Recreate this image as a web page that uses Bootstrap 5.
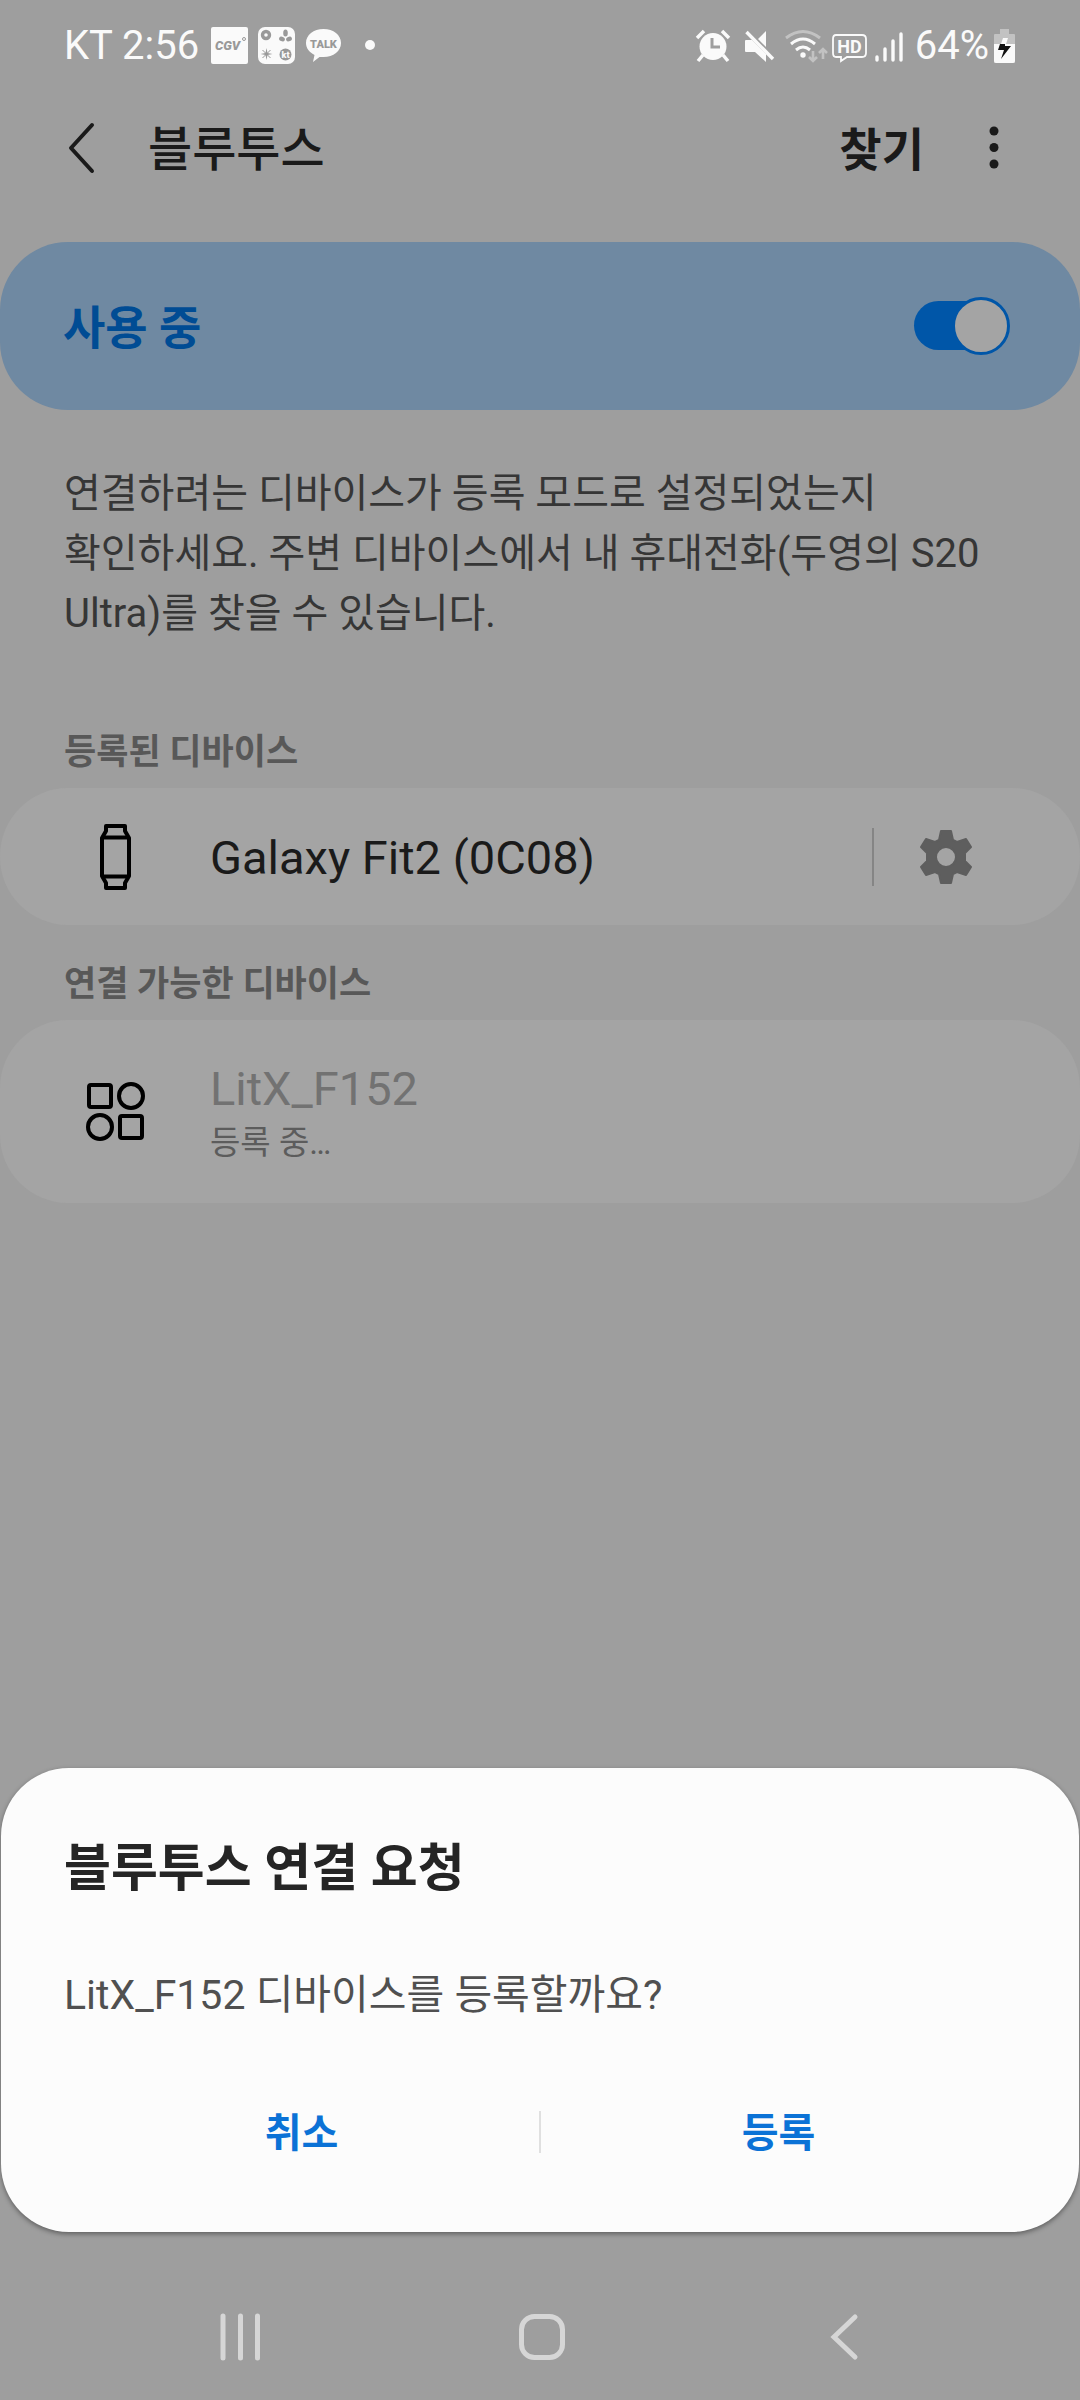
<!DOCTYPE html>
<html lang="ko">
<head>
<meta charset="utf-8">
<meta name="viewport" content="width=device-width, initial-scale=1">
<title>블루투스</title>
<link href="https://cdn.jsdelivr.net/npm/bootstrap@5.3.0/dist/css/bootstrap.min.css" rel="stylesheet">
<style>
body { background: #9e9e9e; color: #1a1a1a; font-family: Roboto, "Noto Sans CJK KR", sans-serif; }
svg { display: block; flex: none; }
.status-bar { height: 90px; padding: 2px 64px 0; color: #fafafa; font-size: 40px; line-height: 48px; }
.clock { margin-right: 12px; }
.app-bar { height: 116px; padding: 0 78px 0 64px; margin-bottom: 36px; }
.app-bar h1, .find-btn { font-size: 48px; line-height: 60px; padding-top: 4px; font-weight: 500; color: #1a1a1a; }
.plain-btn { background: none; border: 0; padding: 0; color: inherit; }
.find-btn { font-size: 46px; padding-top: 4px; font-weight: 700; }
.panel-row { border-radius: 68px; background: #a4a4a4; }
.panel-on { background: #6f89a2; color: #004c94; height: 168px; padding: 0 70px 0 63px; font-size: 46px; line-height: 60px; font-weight: 700; }
.panel-on label { padding-top: 4px; }
.toggle-box { appearance: none; position: relative; width: 96px; height: 58px; margin: 0; }
.toggle-box::before { content: ""; position: absolute; inset: 4px 12px 5px 0; border-radius: 25px; background: #0056a8; }
.toggle-box::after { content: ""; position: absolute; top: 0; right: 0; width: 58px; height: 58px; border-radius: 50%; border: 3px solid #0056a8; background: #a4a4a4; }
.intro { padding: 54px 64px 0; margin-bottom: 80px; font-size: 40px; line-height: 60px; color: #363636; word-break: keep-all; }
.group-label { padding: 4px 64px 0; font-size: 35px; line-height: 50px; font-weight: 700; color: #585858; margin-bottom: 10px; }
.device { padding: 0 106px 0 84px; }
.device-icon { width: 126px; }
.device-name { font-size: 47px; line-height: 60px; padding-top: 3px; }
.device-note { font-size: 33px; line-height: 48px; color: #5c5c5c; }
.paired { height: 137px; margin-bottom: 31px; }
.pairing { height: 183px; }
.pairing .device-name { color: #727272; }
.split { width: 2px; height: 58px; background: #858585; margin-right: 44px; }
.sheet { margin: 0 1px; border-radius: 68px; background: #fcfcfc; padding: 66px 63px 54px; box-shadow: 0 2px 5px rgba(0,0,0,.4); }
.sheet h2 { font-size: 51px; line-height: 70px; font-weight: 700; color: #252525; margin-bottom: 61px; }
.sheet p { font-size: 41px; line-height: 60px; color: #505050; margin-bottom: 61px; }
.sheet-btn { font-size: 40px; line-height: 60px; padding: 18px 0 14px; font-weight: 700; color: #0b72d6; }
.sheet-split { width: 2px; height: 42px; background: #e0e0e0; }
.nav-keys { height: 168px; padding: 42px 211px 0 215px; }
</style>
<script src="https://cdn.jsdelivr.net/npm/bootstrap@5.3.0/dist/js/bootstrap.bundle.min.js"></script>
</head>
<body>
<div class="d-flex flex-column min-vh-100">
  <header class="status-bar d-flex align-items-center justify-content-between">
    <div class="d-flex align-items-center">
      <span class="clock">KT 2:56</span>
      <svg width="166" height="40" viewBox="0 0 166 40" fill="#fafafa">
        <rect x="0" y="1" width="37" height="37" rx="2"/>
        <text x="4" y="24" font-family="Roboto" font-size="13" font-weight="900" font-style="italic" fill="#999">CGV</text><circle cx="33" cy="13" r="1.5" fill="none" stroke="#999"/>
        <rect x="47" y="1" width="37" height="37" rx="7"/>
        <g fill="#999"><circle cx="55" cy="9" r="3.500" fill="none" stroke="#999" stroke-width="3.4"/>
        <ellipse cx="74.500" cy="7" rx="2.300" ry="3.500"/><ellipse cx="71" cy="13" rx="3" ry="2.300" transform="rotate(25 71 13)"/><ellipse cx="78" cy="13" rx="3" ry="2.300" transform="rotate(-25 78 13)"/>
        <path d="M55.500 22l1 5 5 1-5 1-1 5-1-5-5-1 5-1z"/><path d="M51.500 24l8 8M59.500 24l-8 8" stroke="#999" stroke-width="1"/>
        <circle cx="74.500" cy="28.500" r="6"/></g>
        <text x="74.500" y="32" text-anchor="middle" font-family="Roboto" font-size="9" font-weight="900">kt</text>
        <path d="M112.500 3c10 0 17.500 6 17.500 14s-7.500 14-17.500 14l-4 0-6.500 5 1.500-7C98 26 95 22 95 17 95 9 102.500 3 112.500 3z"/>
        <text x="112.500" y="21.500" text-anchor="middle" font-family="Roboto" font-size="11" font-weight="900" fill="#999">TALK</text>
        <circle cx="159" cy="19" r="5"/>
      </svg>
    </div>
    <div class="d-flex align-items-center">
      <svg width="222" height="40" viewBox="0 0 222 40" fill="#fafafa">
        <circle cx="20" cy="20.500" r="13.500"/><path d="M19 12v9h8" fill="none" stroke="#9e9e9e" stroke-width="3"/>
        <path d="M4 12l7-7M29 5l7 7M10 29l-5 6M30 29l5 6" stroke="#fafafa" stroke-width="3.500"/>
        <path d="M53 14h6l14 14v8L62 26h-9q-1 0-1-1V15q0-1 1-1zM65 13l8-8v16z"/><path d="M53.500 6L80 33" stroke="#fafafa" stroke-width="3.400"/>
        <path d="M93 12q17-13 34 0" fill="none" stroke="#c2c2c2" stroke-width="3"/><path d="M98 18q12-10 24 0M103 24q7-6 14 0" fill="none" stroke="#fafafa" stroke-width="3"/><circle cx="110" cy="29" r="2.700"/>
        <path d="M120 25v10m-4-4l4 4 4-4M130 33V23m-4 4l4-4 4 4" fill="none" stroke="#c2c2c2" stroke-width="2.600"/>
        <path d="M143 9h26q4 0 4 4v14q0 4-4 4h-15l-6 4v-4h-5q-3 0-3-4V13q0-4 3-4z" fill="none" stroke="#fafafa" stroke-width="1.800"/>
        <text x="156.500" y="26.500" text-anchor="middle" font-family="Roboto" font-size="18" font-weight="700">HD</text>
        <path d="M184 34v-3M192 34V23M200 34V15M208 34V8" stroke="#fafafa" stroke-width="3.400" stroke-linecap="round"/>
      </svg>
      <span>64%</span>
      <svg class="ms-1" width="23" height="36" viewBox="0 0 23 36"><path d="M7 1h9v5h5q1 0 1 1v27q0 1-1 1H2q-1 0-1-1V7q0-1 1-1h5z" fill="#c2c2c2"/><path d="M1 16h21v17q0 2-2 2H3q-2 0-2-2z" fill="#fafafa"/><path d="M10 10h5l-2 6H8z" fill="#fafafa"/><path d="M7 16h5v2h6L8 31l3-9H5z" fill="#111"/></svg>
    </div>
  </header>

  <nav class="app-bar d-flex align-items-center">
    <button class="plain-btn" type="button" aria-label="뒤로"><svg width="84" height="52" viewBox="0 0 84 52"><path d="M28 3L7 26l21 23" fill="none" stroke="#1a1a1a" stroke-width="4" stroke-linecap="round" stroke-linejoin="round"/></svg></button>
    <h1 class="mb-0 me-auto">블루투스</h1>
    <button class="plain-btn find-btn" type="button">찾기</button>
    <button class="plain-btn ms-5" type="button" aria-label="옵션 더보기"><svg width="30" height="52" viewBox="4 0 30 52" fill="#1a1a1a"><circle cx="26" cy="9" r="4.500"/><circle cx="26" cy="25.500" r="4.500"/><circle cx="26" cy="42" r="4.500"/></svg></button>
  </nav>

  <main>
    <div class="panel-row panel-on d-flex align-items-center justify-content-between">
      <label for="bt">사용 중</label>
      <input class="toggle-box" type="checkbox" role="switch" id="bt" checked>
    </div>
    <p class="intro">연결하려는 디바이스가 등록 모드로 설정되었는지 확인하세요. 주변 디바이스에서 내 휴대전화(두영의 S20 Ultra)를 찾을 수 있습니다.</p>

    <h2 class="group-label">등록된 디바이스</h2>
    <div class="panel-row device paired d-flex align-items-center">
      <div class="device-icon"><svg width="64" height="68" viewBox="0 0 64 68"><g fill="none" stroke="#000" stroke-width="4" stroke-linejoin="round"><path d="M22 3h19v5l4 7v38l-4 7v5H22v-5l-4-7V15l4-7z" /><path d="M18 14.500h27M18 53.500h27"/></g></svg></div>
      <span class="device-name me-auto">Galaxy Fit2 (0C08)</span>
      <span class="split"></span>
      <button class="plain-btn" type="button" aria-label="설정"><svg width="56" height="56" viewBox="0 0 56 56"><path fill="#5e5e5e" fill-rule="evenodd" stroke="#5e5e5e" stroke-width="2" stroke-linejoin="round" d="M23 2h10l2 9 4 2 9-3 5 8-6 6v8l6 6-5 8-9-3-4 2-2 9H23l-2-9-4-2-9 3-5-8 6-6v-8l-6-6 5-8 9 3 4-2zM28 18a10 10 0 1 0 0 20 10 10 0 1 0 0-20z"/></svg></button>
    </div>

    <h2 class="group-label">연결 가능한 디바이스</h2>
    <div class="panel-row device pairing d-flex align-items-center">
      <div class="device-icon"><svg width="64" height="64" viewBox="0 0 64 64"><g fill="none" stroke="#000" stroke-width="4"><rect x="5" y="5" width="22" height="22" rx="2"/><circle cx="47" cy="16" r="12"/><circle cx="16" cy="47" r="12"/><rect x="36" y="36" width="22" height="22" rx="2"/></g></svg></div>
      <div>
        <div class="device-name">LitX_F152</div>
        <div class="device-note">등록 중…</div>
      </div>
    </div>
  </main>

  <section class="sheet mt-auto" role="dialog" aria-labelledby="ask">
    <h2 id="ask">블루투스 연결 요청</h2>
    <p>LitX_F152 디바이스를 등록할까요?</p>
    <div class="d-flex align-items-center">
      <button class="plain-btn sheet-btn flex-fill w-50" type="button">취소</button>
      <span class="sheet-split"></span>
      <button class="plain-btn sheet-btn flex-fill w-50" type="button">등록</button>
    </div>
  </section>

  <footer class="nav-keys d-flex align-items-center justify-content-between">
    <button class="plain-btn" type="button" aria-label="최근 앱"><svg width="50" height="48" viewBox="0 0 50 48"><path d="M8 3v42M25.500 3v42M42.500 3v42" stroke="#d6d6d6" stroke-width="5" stroke-linecap="round"/></svg></button>
    <button class="plain-btn" type="button" aria-label="홈"><svg width="48" height="48" viewBox="0 0 48 48"><rect x="3.500" y="3.500" width="41" height="41" rx="13" fill="none" stroke="#d6d6d6" stroke-width="5"/></svg></button>
    <button class="plain-btn" type="button" aria-label="뒤로 가기"><svg width="50" height="48" viewBox="0 0 50 48"><path d="M36 4L15 24l21 20" fill="none" stroke="#d6d6d6" stroke-width="5" stroke-linecap="round"/></svg></button>
  </footer>
</div>
</body>
</html>
